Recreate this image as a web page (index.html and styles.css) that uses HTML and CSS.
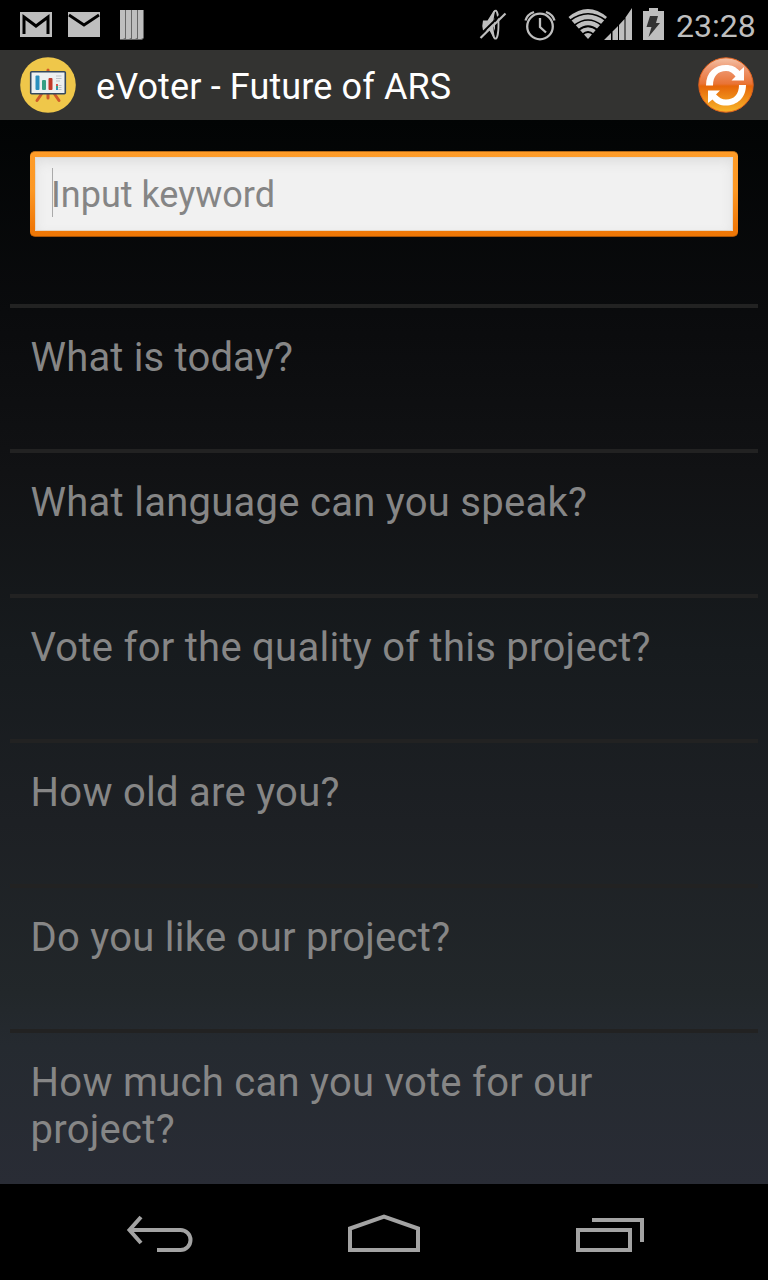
FILE: index.html
```html
<!DOCTYPE html>
<html lang="en">
<head>
<meta charset="utf-8">
<title>eVoter - Future of ARS</title>
<link rel="stylesheet" href="styles.css">
</head>
<body>
<div class="screen">
  <header class="status">
    <svg class="status-left" width="160" height="50" viewBox="0 0 160 50">
      <path fill="#bebebe" d="M20 12h32v25H20zM68 12h32v25H68z"/>
      <path fill="none" stroke="#000" stroke-width="3" d="M24 34V17L36 26 48 17V34"/>
      <path fill="none" stroke="#000" stroke-width="2.8" d="M69 15L84 25 99 15"/>
      <path fill="#666" d="M120 10h24v28l-2 2h-22z"/>
      <path fill="#bebebe" d="M120 10h5v28l-2 1h-3zM126 10h5v28l-2 1h-3zM132 10h5v28l-2 1h-3zM138 10h5v28l-2 1h-3z"/>
    </svg>
    <div class="status-right">
      <svg width="200" height="50" viewBox="470 0 200 50" fill="#bebebe">
        <path d="M483 20.500h4.500L493.500 11l3-1.200V39l-3-1-4-7.500H483q-1.300-5 0-10z"/>
        <ellipse cx="495.500" cy="24.700" rx="3" ry="14" fill="#000" stroke="#bebebe" stroke-width="1.800"/>
        <path d="M495 18q-3 6 0 13z"/>
        <path fill="none" stroke="#000" stroke-width="2" d="M478.500 36.500L503.500 12"/>
        <path fill="none" stroke="#bebebe" stroke-width="2.200" d="M480.500 38L505.500 13.500"/>
        <g fill="none" stroke="#bebebe" stroke-width="2.300">
          <circle cx="540" cy="26.500" r="12.800"/>
          <path d="M525.500 20.500Q527 14.500 534 12M554.500 20.500Q553 14.500 546 12M540 18v9l6 5.500"/>
        </g>
        <path d="M568.500 17Q588 1 607 17L588 39z"/>
        <path fill="none" stroke="#000" stroke-width="1.700" d="M570 20.500Q588 7 606 20.500M574 25.500Q588 14.500 602 25.500M578.500 30Q588 22.500 597.500 30M582.500 34.500Q588 29.500 593.500 34.500"/>
        <path d="M604 40l7-7v7zM612.500 40v-8.500l5.500-5.500V40zM619 40V25l5.500-6V40zM625.500 40V17.500l6.500-9.500v32z"/>
        <path d="M643 11h6V8h9v3h6v29h-21z"/>
        <path fill="#333" d="M650 16h8l-2 7h4L648.500 37l3-10h-5z"/>
      </svg>
      <span class="clock">23:28</span>
    </div>
  </header>

  <div class="action-bar">
    <svg width="56" height="56" viewBox="0 0 56 56">
      <circle cx="28" cy="28" r="27.800" fill="#efc74a"/>
      <path stroke="#cf5a2b" stroke-width="3" stroke-linecap="round" fill="none" d="M28 13v28M21.500 37L17 43.500M34.500 37L39 43.500"/>
      <rect x="10.700" y="14.700" width="34.600" height="22" rx="1" fill="#ecf0f1" stroke="#34495e" stroke-width="1.600"/>
      <rect x="15.500" y="18.500" width="4" height="14.500" rx="1" fill="#2a8fbd"/>
      <rect x="22" y="23" width="4" height="10" rx="1" fill="#35a085"/>
      <rect x="28.500" y="21" width="4" height="12" rx="1" fill="#c0392b"/>
      <path stroke="#bdc3c7" stroke-width="1" d="M36 19h5.500M36 21.500h5.500M36 24h4M38.500 28.500h3M38.500 30.500h3M38.500 32.500h3"/>
      <path fill="#d9534f" d="M36 27h2v2h-2z"/><path fill="#35a085" d="M36 29h2v2h-2z"/><path fill="#2a8fbd" d="M36 31h2v2h-2z"/>
    </svg>
    <h1 class="title">eVoter - Future of ARS</h1>
    <svg width="56" height="56" viewBox="0 0 56 56">
      <defs>
        <linearGradient id="ball" x1="0" y1="0" x2="0" y2="1">
          <stop offset="0" stop-color="#f4c2a6"/>
          <stop offset=".2" stop-color="#ee9871"/>
          <stop offset=".48" stop-color="#e97335"/>
          <stop offset=".52" stop-color="#e66609"/>
          <stop offset="1" stop-color="#f8b62a"/>
        </linearGradient>
      </defs>
      <circle cx="28" cy="28" r="27.200" fill="url(#ball)" stroke="#e0601c" stroke-width="1"/>
      <path fill="#fff" d="M8 28.500C8 15 17 8 28 8c6 0 10 2 13.500 6l4.500-4v13.500H33.500l4-4C35 16 32 14 28 14c-8 0-13 5-13 14.500z"/>
      <path fill="#fff" d="M48 28C48 41 39 48.500 28 48.500c-6 0-10-2-13.500-6L10 46V33.500h12l-4 4C21 40.500 24 42.500 28 42.500c8 0 13-5 13-14.500z"/>
    </svg>
  </div>

  <main class="content">
    <div class="field"><div class="field-inner"><span class="caret"></span><span class="hint">Input keyword</span></div></div>
    <ul class="list">
      <li class="item item-first">What is today?</li>
      <li class="item">What language can you speak?</li>
      <li class="item">Vote for the quality of this project?</li>
      <li class="item">How old are you?</li>
      <li class="item">Do you like our project?</li>
      <li class="item">How much can you vote for our<br>project?</li>
    </ul>
  </main>

  <nav class="nav">
    <svg width="68" height="40" viewBox="126 1214 68 40" fill="none" stroke="#a3a3a3" stroke-width="4"><path d="M130 1230h50.500a10 10 0 0 1 0 20h-23.500"/><path d="M141 1217L129.500 1230 141 1243"/></svg>
    <svg width="72" height="40" viewBox="348 1214 72 40" fill="none" stroke="#a3a3a3" stroke-width="4"><path d="M350 1250v-21.500l34-12 34 12v21.500z"/></svg>
    <svg width="68" height="40" viewBox="576 1214 68 40" fill="none" stroke="#a3a3a3" stroke-width="4"><path d="M578 1230h52v20h-52zM592 1220h50v22"/></svg>
  </nav>
</div>
</body>
</html>
```
FILE: styles.css
```css
* { box-sizing: border-box; }
body { margin: 0; background: #000; font-family: Roboto, "Noto Sans", sans-serif; }
svg { display: block; flex: none; }
.screen { width: 768px; height: 1280px; display: flex; flex-direction: column; overflow: hidden; }

.status { height: 50px; display: flex; justify-content: space-between; background: #000; }
.status-right { display: flex; width: 298px; }
.clock { color: #bebebe; font-size: 32px; line-height: 38px; padding-top: 7px; margin-left: 6px; white-space: nowrap; }

.action-bar { height: 70px; display: flex; align-items: center; padding: 0 14px 0 20px; background: #333331; }
.title { flex: 1; margin: 4px 0 0 20px; font-size: 36px; font-weight: 400; line-height: 42px; letter-spacing: .13px; color: #fff; white-space: nowrap; }

.content { height: 1064px; padding: 31px 10px 0; background: linear-gradient(#020404 0, #0a0b0d 18%, #111214 33%, #171b1e 50%, #1d2024 66%, #22272a 82%, #252a30 87%, #292c35 100%); overflow: hidden; }
.field { height: 86px; margin: 0 20px; padding: 5px; border-radius: 5px; background: linear-gradient(#ff9c28, #fc9824 45%, #f07808 90%, #ee7706); border-top: 1px solid #b86c18; border-bottom: 1px solid #a85205; }
.field-inner { height: 100%; display: flex; align-items: center; padding-left: 17px; background: #f1f1f1; box-shadow: inset 0 5px 12px #dedede, inset 0 0 0 1px #e6d3bd; }
.caret { width: 1px; height: 49px; margin-top: -3px; background: #aaa; }
.hint { margin: 2px 0 0 -2px; font-size: 36px; line-height: 42px; color: #858585; white-space: nowrap; }

.list { list-style: none; margin: 67px 0 0; padding: 0; }
.item { height: 145px; border-top: 4px solid #222; padding: 26px 0 0 20.5px; font-size: 40px; line-height: 47px; letter-spacing: .27px; color: #868686; white-space: nowrap; }
.item-first { letter-spacing: .18px; }

.nav { height: 96px; display: grid; grid-template-columns: 222px 228px 68px; align-items: start; padding: 30px 0 0 126px; background: #000; }
```
